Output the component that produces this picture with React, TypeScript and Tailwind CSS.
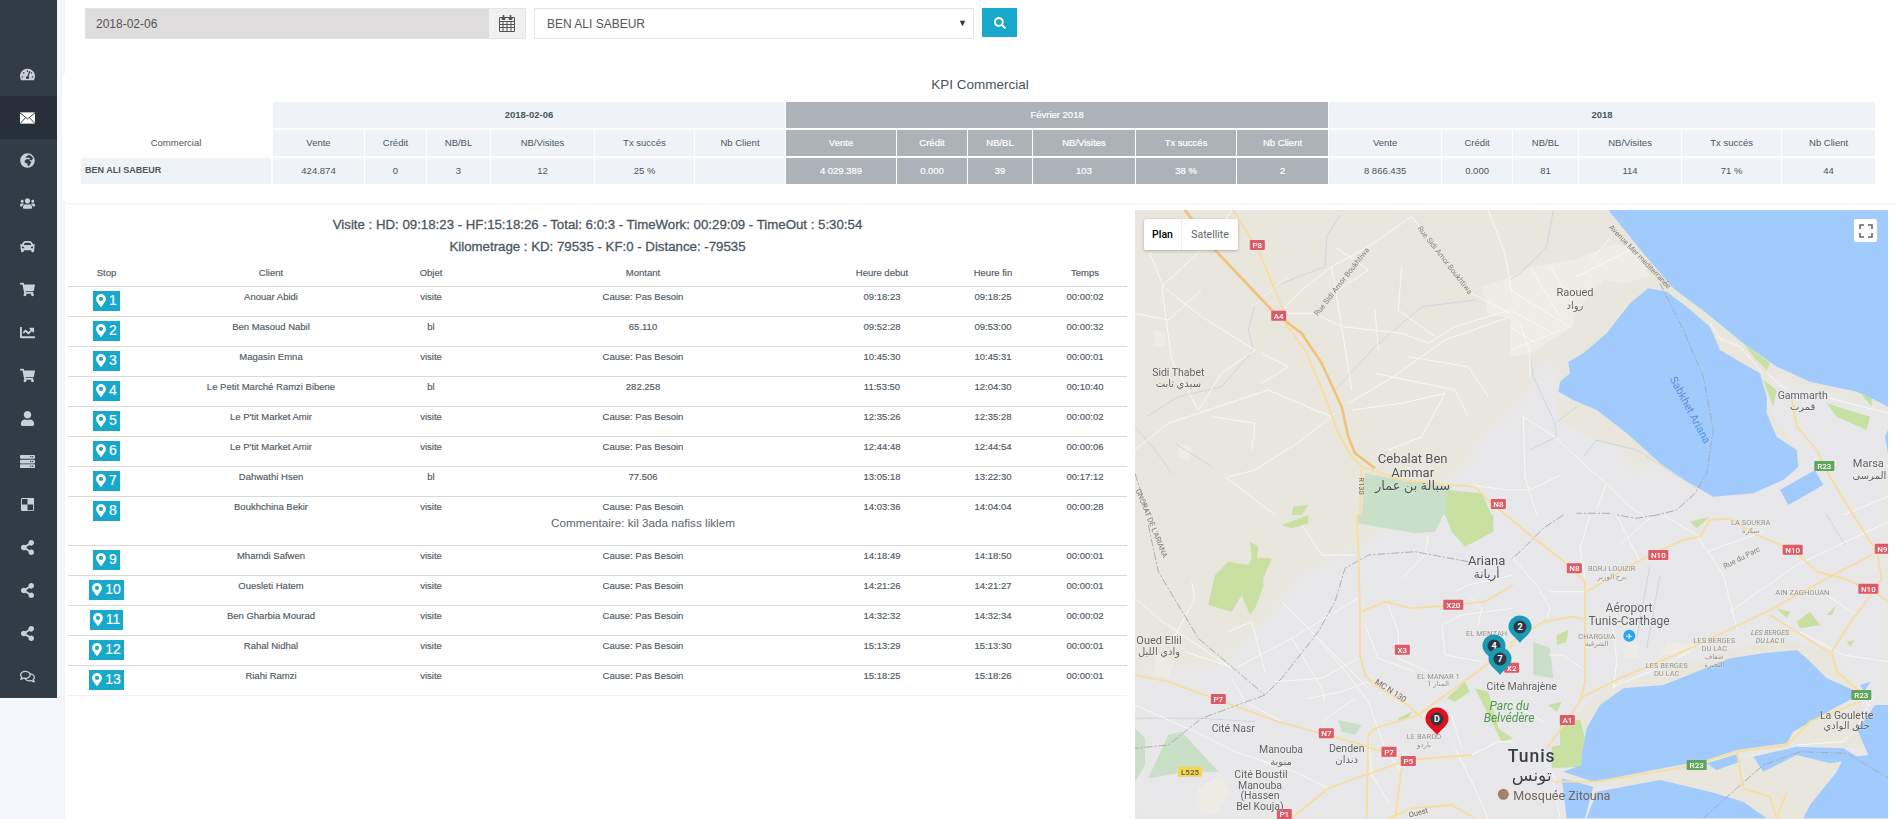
import {
  FaCar,
  FaChartLine,
  FaDelicious,
  FaGlobeAfrica,
  FaMapMarkerAlt,
  FaRegComments,
  FaSearch,
  FaServer,
  FaShareAlt,
  FaShoppingCart,
  FaTachometerAlt,
  FaUser,
  FaUsers,
} from 'react-icons/fa';

function MailIcon({ className }: { className?: string }) {
  return (
    <svg viewBox="0 0 16 12" className={className}>
      <rect width="16" height="12" fill="#fff" />
      <path d="M0 .5L8 7l8-6.5M0 12l6-6.5M16 12l-6-6.5" fill="none" stroke="#27303a" strokeWidth="1" />
    </svg>
  );
}

function CalendarIcon() {
  return (
    <svg viewBox="0 0 16 17" className="h-[17px] w-[16px]" fill="none" stroke="#555" strokeWidth="1">
      <path d="M.5 2.5h15v14H.5zM.5 6.5h15M.5 9.5h15M.5 12.5h15M4 6.5v10M8 6.5v10M12 6.5v10" />
      <path d="M3 2.5h3v2H3zM10 2.5h3v2h-3z" fill="#555" />
      <path d="M4.5 0v3M11.5 0v3" strokeWidth="1.6" />
    </svg>
  );
}

const NAV = [
  FaTachometerAlt,
  MailIcon,
  FaGlobeAfrica,
  FaUsers,
  FaCar,
  FaShoppingCart,
  FaChartLine,
  FaShoppingCart,
  FaUser,
  FaServer,
  FaDelicious,
  FaShareAlt,
  FaShareAlt,
  FaShareAlt,
  FaRegComments,
];

const KPI_HEAD = ['Vente', 'Crédit', 'NB/BL', 'NB/Visites', 'Tx succés', 'Nb Client'];
const KPI_WIDTHS = [192, 92, 62, 64, 104, 100, 91, 111, 71, 65, 103, 101, 92, 113, 71, 66, 103, 100, 94];
const KPI_DAY = ['424.874', '0', '3', '12', '25 %', ''];
const KPI_MONTH = ['4 029.389', '0.000', '39', '103', '38 %', '2'];
const KPI_YEAR = ['8 866.435', '0.000', '81', '114', '71 %', '44'];

const VISIT_WIDTHS = [77, 252, 68, 356, 122, 100, 84];

const VISITS = [
  ['Anouar Abidi', 'visite', 'Cause: Pas Besoin', '09:18:23', '09:18:25', '00:00:02'],
  ['Ben Masoud Nabil', 'bl', '65.110', '09:52:28', '09:53:00', '00:00:32'],
  ['Magasin Emna', 'visite', 'Cause: Pas Besoin', '10:45:30', '10:45:31', '00:00:01'],
  ['Le Petit Marché Ramzi Bibene', 'bl', '282.258', '11:53:50', '12:04:30', '00:10:40'],
  ["Le P'tit Market Amir", 'visite', 'Cause: Pas Besoin', '12:35:26', '12:35:28', '00:00:02'],
  ["Le P'tit Market Amir", 'visite', 'Cause: Pas Besoin', '12:44:48', '12:44:54', '00:00:06'],
  ['Dahwathi Hsen', 'bl', '77.506', '13:05:18', '13:22:30', '00:17:12'],
  ['Boukhchina Bekir', 'visite', 'Cause: Pas Besoin', '14:03:36', '14:04:04', '00:00:28'],
  ['Mhamdi Safwen', 'visite', 'Cause: Pas Besoin', '14:18:49', '14:18:50', '00:00:01'],
  ['Ouesleti Hatem', 'visite', 'Cause: Pas Besoin', '14:21:26', '14:21:27', '00:00:01'],
  ['Ben Gharbia Mourad', 'visite', 'Cause: Pas Besoin', '14:32:32', '14:32:34', '00:00:02'],
  ['Rahal Nidhal', 'visite', 'Cause: Pas Besoin', '15:13:29', '15:13:30', '00:00:01'],
  ['Riahi Ramzi', 'visite', 'Cause: Pas Besoin', '15:18:25', '15:18:26', '00:00:01'],
];

// map is drawn at 3x: coordinates are noted per quadrant (A top left, B top right, C bottom left, D bottom right)
const shift = (dx: number, dy: number) => (...p: number[]) => p.map((v, i) => (i % 2 ? v + dy : v + dx));
const A = shift(0, 0);
const B = shift(1125, 0);
const C = shift(0, 915);
const D = shift(1125, 915);
const line = (p: number[]) => {
  const out: string[] = [];
  for (let i = 0; i < p.length; i += 2) out.push(`${(p[i] / 3).toFixed(1)},${(p[i + 1] / 3).toFixed(1)}`);
  return out.join(' ');
};

const GREY_LAND = [1240, 440, 1170, 560, 1040, 680, 1000, 760, 700, 995, 500, 1095, 380, 1245, 250, 1365, 0, 1385, 0, 1827, 2259, 1827, 2259, 600, 1900, 500, 1700, 700, 1500, 790, 1400, 640, 1300, 560];

const SHORES = [
  B(130, 560, 150, 640, 250, 690, 400, 740, 550, 835, 700, 860, 850, 790, 880, 740, 620, 380, 700, 420, 800, 480, 770, 560),
  D(200, 600, 300, 510, 450, 470, 680, 400, 760, 380, 860, 380, 960, 420, 1050, 530, 900, 640, 830, 700, 680, 720, 250, 810, 180, 800),
  D(330, 790, 680, 730, 1000, 700, 980, 760, 880, 910, 260, 910),
  D(920, 620, 1050, 570, 1060, 700, 850, 690),
  B(240, 130, 320, 60, 290, 0, 600, 340, 620, 420, 430, 240),
];

const WATER = [
  B(295, 0, 400, 130, 490, 235, 590, 310, 700, 400, 800, 470, 900, 515, 1040, 545, 1095, 570, 1134, 590, 1134, 0),
  B(415, 235, 470, 245, 530, 290, 600, 350, 630, 420, 680, 450, 750, 490, 770, 560, 770, 610, 800, 680, 860, 720, 865, 770, 820, 810, 730, 850, 610, 860, 540, 820, 450, 760, 350, 670, 260, 600, 190, 570, 145, 545, 150, 515, 180, 490, 175, 455, 220, 430, 290, 370, 360, 280),
  B(810, 840, 915, 780, 940, 825, 835, 885),
  B(1125, 680, 1134, 660, 1134, 730),
  D(215, 720, 230, 640, 270, 570, 340, 520, 460, 510, 560, 470, 660, 430, 760, 415, 860, 405, 890, 430, 950, 490, 1030, 525, 1030, 550, 980, 575, 920, 610, 850, 650, 830, 685, 680, 705, 590, 735, 430, 765, 250, 800, 160, 770, 215, 750),
  D(590, 745, 680, 718, 690, 740, 620, 765),
  D(230, 910, 260, 830, 450, 795, 600, 830, 700, 860, 770, 910),
  D(155, 790, 250, 815, 225, 910, 170, 910),
  D(730, 725, 860, 695, 1000, 700, 1050, 730, 960, 745, 860, 720, 760, 770),
  D(1040, 640, 1075, 720, 1000, 730, 980, 770, 900, 870, 880, 910, 1134, 910, 1134, 570, 1095, 570, 1060, 620),
  D(1050, 510, 1082, 500, 1062, 530),
];

const PARKS_PALE = [
  A(690, 790, 800, 810, 950, 830, 930, 915, 680, 915),
  C(670, 0, 925, 0, 900, 50, 840, 55, 670, 25),
  C(100, 660, 140, 650, 250, 770, 130, 775, 40, 790),
  C(610, 615, 680, 630, 660, 660, 620, 650),
  D(70, 380, 120, 400, 130, 490, 70, 480),
  C(0, 640, 30, 670, 30, 750, 0, 800),
];

const PARKS = [
  A(940, 840, 1040, 850, 1070, 915, 930, 915),
  C(930, 0, 1075, 0, 1075, 50, 990, 95, 950, 50),
  A(475, 890, 520, 885, 500, 915, 470, 915),
  C(440, 30, 520, 0, 520, 25, 470, 40),
  C(220, 270, 240, 180, 280, 140, 340, 150, 350, 130, 410, 130, 385, 190, 385, 215, 360, 280, 345, 300, 320, 240, 290, 290),
  C(345, 80, 370, 95, 365, 135, 350, 130),
  C(935, 550, 990, 500, 1005, 530, 960, 560),
  C(1020, 520, 1060, 530, 1090, 640, 1134, 670, 1100, 680, 1060, 600),
  C(790, 610, 830, 590, 820, 610, 790, 620),
  D(150, 620, 210, 615, 225, 670, 215, 755, 125, 760, 125, 695, 150, 690),
  D(140, 360, 175, 345, 170, 380, 140, 390),
  D(115, 570, 155, 560, 140, 590),
  D(860, 320, 900, 290, 930, 330, 870, 340),
  D(950, 300, 980, 270, 965, 300),
  D(540, 20, 600, 5, 560, 40),
  D(1010, 380, 1035, 375, 1020, 395),
  D(800, 280, 840, 290, 830, 310),
  B(700, 400, 780, 460, 770, 480, 730, 440),
  B(950, 580, 1080, 620, 1070, 660, 980, 620),
  B(1055, 555, 1085, 560, 1085, 590),
  B(760, 510, 800, 540, 790, 590),
];

const PALE_BLOCKS = [
  B(0, 200, 60, 170, 190, 150, 320, 100, 380, 120, 420, 200, 340, 220, 280, 210, 200, 300, 190, 350, 60, 430, 0, 440),
  A(1040, 230, 1125, 200, 1125, 320, 1060, 320),
  C(190, 820, 260, 780, 285, 830, 240, 900, 190, 880),
  C(60, 410, 120, 440, 100, 490, 60, 480),
  A(60, 360, 95, 370, 90, 410, 55, 410),
  A(130, 700, 170, 710, 160, 750, 130, 740),
  D(350, 380, 390, 380, 385, 430, 340, 430),
  D(450, 420, 470, 380, 560, 390, 530, 420),
];

const CREEKS = [
  A(615, 15, 575, 80, 570, 170, 440, 220, 360, 280, 340, 360, 355, 420, 260, 530, 130, 560, 35, 620),
  A(1020, 270, 860, 290, 720, 410, 600, 540),
  A(120, 700, 230, 770),
  A(0, 650, 60, 720, 110, 790),
  B(130, 0, 110, 110, 30, 190, 0, 210),
  B(60, 430, 70, 500, 135, 640, 200, 590),
  B(135, 640, 140, 680, 60, 720),
  B(220, 740, 260, 690, 380, 720, 540, 820),
  C(0, 610, 200, 610, 360, 620),
  D(420, 150, 380, 370),
  D(450, 180, 410, 400),
  D(950, 0, 1005, 90),
];

const MINOR_ROADS = [
  A(0, 720, 100, 640, 250, 590, 400, 540, 540, 600, 590, 620),
  A(80, 230, 230, 90, 290, 0),
  A(80, 230, 110, 450, 190, 600),
  A(0, 310, 100, 330, 200, 240),
  A(45, 130, 85, 230, 200, 320, 360, 420),
  A(440, 310, 540, 310, 620, 350),
  A(350, 290, 460, 200),
  A(360, 420, 260, 490, 190, 600),
  A(830, 20, 700, 110, 590, 170, 500, 240, 440, 300),
  A(590, 170, 620, 350, 650, 540),
  A(620, 350, 800, 370, 880, 400, 960, 350, 1125, 300),
  A(640, 580, 760, 510, 930, 390, 1125, 320),
  A(720, 490, 960, 540, 1000, 620),
  A(800, 170, 790, 300, 900, 380),
  A(830, 20, 1010, 250, 1125, 310),
  A(1060, 0, 1110, 130, 1130, 250),
  A(280, 800, 360, 780, 500, 690, 600, 610),
  A(650, 600, 800, 580, 930, 550, 860, 680, 760, 720),
  A(1000, 825, 1125, 840),
  A(380, 430, 460, 470, 380, 520),
  A(230, 620, 360, 640, 350, 720),
  A(600, 110, 700, 180, 610, 240),
  A(820, 440, 1000, 470, 1060, 560),
  A(720, 300, 730, 420),
  A(270, 800, 420, 915),
  B(40, 620, 135, 680, 230, 770, 300, 830, 360, 890, 400, 915),
  B(40, 620, 45, 800, 80, 915),
  B(0, 840, 60, 840, 150, 795),
  B(290, 820, 260, 900),
  B(0, 240, 180, 350),
  B(0, 300, 130, 370),
  B(0, 350, 80, 400),
  B(60, 170, 150, 320),
  B(120, 170, 190, 280),
  B(0, 420, 180, 350),
  B(30, 340, 60, 430, 60, 500),
  B(200, 200, 360, 120),
  B(300, 85, 240, 150),
  B(620, 380, 690, 410, 760, 490),
  B(600, 340, 640, 400),
  B(770, 490, 830, 540),
  B(960, 565, 1134, 610),
  B(1000, 915, 1134, 860),
  C(440, 260, 530, 350, 640, 480, 700, 560, 750, 700, 800, 770),
  C(670, 250, 470, 370, 300, 460, 150, 410),
  C(470, 370, 560, 520, 570, 560),
  C(530, 350, 700, 520),
  C(500, 30, 560, 120, 660, 120),
  C(0, 570, 180, 650, 300, 710, 480, 770, 580, 820),
  C(420, 500, 560, 490, 670, 430),
  C(520, 550, 620, 530, 700, 500),
  C(560, 620, 660, 550),
  C(760, 270, 790, 350, 790, 430, 880, 470),
  C(690, 330, 730, 430, 840, 470),
  C(880, 60, 870, 120, 800, 190),
  C(960, 230, 1000, 210, 1134, 180),
  C(920, 330, 980, 300, 1134, 280),
  C(920, 330, 930, 420, 1040, 440),
  C(1010, 720, 1090, 680, 1134, 680),
  C(950, 600, 980, 700),
  C(700, 660, 710, 780, 760, 860),
  C(290, 490, 330, 560, 440, 620),
  C(280, 350, 350, 320, 390, 470),
  C(0, 250, 70, 310, 290, 460),
  C(170, 200, 180, 250, 110, 380),
  C(1000, 240, 1040, 280, 1030, 330),
  C(960, 700, 1010, 800, 1060, 910),
  D(240, 0, 210, 100, 225, 190),
  D(320, 0, 390, 140),
  D(430, 0, 330, 90),
  D(460, 0, 560, 60, 640, 180, 680, 340),
  D(590, 110, 760, 50),
  D(660, 290, 860, 150, 1134, 20),
  D(1134, 440, 1000, 420, 870, 350),
  D(950, 240, 1040, 300),
  D(0, 120, 80, 210, 120, 280, 110, 310),
  D(120, 230, 230, 230),
  D(310, 340, 320, 440, 310, 520, 340, 490),
  D(0, 560, 100, 620),
  D(115, 420, 160, 420, 215, 460),
  D(80, 700, 140, 800),
  D(130, 800, 150, 910),
  D(250, 890, 300, 840, 450, 800),
  D(310, 515, 420, 470, 540, 410),
  D(1040, 640, 1090, 540),
  D(860, 690, 1000, 680, 1040, 640),
];

const YELLOW_ROADS = [
  A(295, 0, 370, 120, 445, 300),
  A(450, 340, 510, 420, 570, 560, 610, 670, 650, 740, 680, 770),
  A(680, 770, 800, 810, 900, 820, 1020, 830, 1070, 880, 1125, 925),
  D(0, 10, 60, 60, 175, 150, 225, 200, 225, 500, 210, 560, 110, 700),
  A(680, 770, 675, 915),
  C(665, 0, 670, 100, 675, 280, 675, 420, 690, 480, 720, 510, 820, 570, 860, 610),
  C(680, 290, 750, 260, 830, 280, 950, 270, 1050, 260, 1134, 210),
  C(0, 480, 100, 500, 250, 555, 430, 620, 575, 660, 650, 680, 740, 710, 820, 735),
  C(700, 660, 720, 640, 850, 600, 1000, 490, 1134, 390),
  D(0, 385, 100, 320, 190, 305, 230, 315),
  C(700, 660, 695, 910),
  C(470, 910, 580, 820, 690, 780, 820, 735, 1010, 720),
  C(800, 760, 780, 910),
  C(760, 910, 830, 880, 950, 870, 1020, 910),
  D(230, 230, 330, 170, 420, 120, 520, 75, 570, 65, 600, 15, 660, 10, 740, 60, 850, 105, 920, 170, 1000, 190, 1075, 220, 1137, 260),
  D(1030, 0, 1100, 110, 1115, 190, 1090, 230, 1030, 310, 965, 410, 980, 470, 1050, 530),
  D(210, 550, 330, 490, 540, 400, 780, 285, 970, 180, 1095, 115, 1137, 95),
  D(780, 300, 960, 415),
  D(130, 800, 260, 800, 530, 755, 680, 710, 830, 690, 900, 620, 1050, 560),
  D(680, 710, 700, 820, 780, 845, 800, 910),
  D(830, 830, 800, 910),
  B(845, 570, 860, 650, 920, 720, 960, 800, 1030, 915),
];

const HIGHWAY = A(150, 0, 240, 120, 410, 300, 460, 340, 500, 370, 560, 460, 620, 590, 640, 680, 660, 730, 720, 775);

const BOUNDARIES = [
  B(450, 220, 520, 360, 580, 500, 610, 660, 590, 790, 555, 850, 500, 900, 440, 915),
  D(440, 0, 380, 10, 320, 0),
  B(300, 910, 200, 910),
  D(160, 0, 100, 40, 30, 110, 0, 135),
  C(1000, 140, 840, 110, 700, 120, 630, 160, 600, 260, 550, 350, 440, 490, 390, 540, 200, 610, 100, 690, 0, 700),
  C(40, 30, 70, 170, 190, 370, 390, 540),
  A(0, 790, 40, 915),
  D(580, 910, 680, 820, 760, 750, 870, 710, 1010, 715, 1137, 790),
];

const RED = '#de5a66';
const GREEN = '#5fa55a';
const GOLD = '#f6d44e';

const SHIELDS: [string, number[], string][] = [
  ['P8', A(367, 105), RED],
  ['A4', A(431, 317), RED],
  ['N8', A(1090, 882), RED],
  ['N8', D(193, 160), RED],
  ['N10', D(445, 120), RED],
  ['N10', D(848, 104), RED],
  ['N9', D(1117, 101), RED],
  ['N10', D(1075, 221), RED],
  ['A1', D(172, 615), RED],
  ['R23', D(1054, 540), GREEN],
  ['R23', D(560, 750), GREEN],
  ['R23', B(943, 768), GREEN],
  ['X20', C(955, 269), RED],
  ['X3', C(802, 404), RED],
  ['X2', C(1130, 458), RED],
  ['P7', C(250, 552), RED],
  ['N7', C(574, 655), RED],
  ['P7', C(762, 710), RED],
  ['P5', C(820, 738), RED],
  ['L525', C(165, 770), GOLD],
  ['P1', C(448, 897), RED],
];

const TOWN = '#616161';
const BIG = '#4f5358';
const QUARTER = '#938d80';

// text, position, size, colour
const LABELS: [string, number[], number, string][] = [
  ['Sidi Thabet', A(130, 487), 10.5, TOWN],
  ['سيدي ثابت', A(130, 521), 10, TOWN],
  ['Cebalat Ben', A(833, 746), 13, BIG],
  ['Ammar', A(833, 787), 13, BIG],
  ['سبالة بن عمار', A(833, 827), 13, BIG],
  ['Raoued', B(195, 247), 11, TOWN],
  ['رواد', B(195, 285), 10, TOWN],
  ['Gammarth', B(878, 557), 10.5, TOWN],
  ['قمرت', B(878, 590), 10, TOWN],
  ['Marsa', B(1075, 760), 11, TOWN],
  ['المرسى', B(1078, 795), 10, TOWN],
  ['Ariana', C(1055, 135), 13, BIG],
  ['أريانة', C(1055, 177), 12, BIG],
  ['Oued Ellil', C(72, 375), 11, TOWN],
  ['وادي الليل', C(72, 410), 10, TOWN],
  ['EL MENZAH', C(1055, 354), 7.5, QUARTER],
  ['EL MANAR 1', C(910, 483), 7.5, QUARTER],
  ['المنار 1', C(910, 507), 7, QUARTER],
  ['Cité Nasr', C(295, 640), 10.5, TOWN],
  ['Manouba', C(438, 704), 10.5, TOWN],
  ['منوبة', C(438, 738), 10, TOWN],
  ['Denden', C(635, 699), 10.5, TOWN],
  ['دندان', C(635, 733), 10, TOWN],
  ['LE BARDO', C(867, 663), 7.5, QUARTER],
  ['باردو', C(867, 689), 7, QUARTER],
  ['Cité Boustil', C(378, 777), 10.5, TOWN],
  ['Manouba', C(375, 810), 10.5, TOWN],
  ['(Hassen', C(375, 842), 10.5, TOWN],
  ['Bel Kouja)', C(375, 875), 10.5, TOWN],
  ['Cité Mahrajène', D(35, 515), 10.5, TOWN],
  ['BORJ LOUIZIR', D(305, 160), 7.5, QUARTER],
  ['برج الوزير', D(305, 187), 7, QUARTER],
  ['LA SOUKRA', D(722, 22), 7.5, QUARTER],
  ['سكرة', D(722, 47), 7, QUARTER],
  ['Aéroport', D(357, 280), 12, TOWN],
  ['Tunis-Carthage', D(357, 318), 12, TOWN],
  ['CHARGUIA', D(260, 363), 7.5, QUARTER],
  ['الشرقية', D(260, 388), 7, QUARTER],
  ['AIN ZAGHOUAN', D(877, 233), 7.5, QUARTER],
  ['LES BERGES', D(613, 377), 7.5, QUARTER],
  ['DU LAC', D(613, 400), 7.5, QUARTER],
  ['ضفاف', D(613, 425), 7, QUARTER],
  ['البحيرة', D(613, 450), 7, QUARTER],
  ['LES BERGES', D(470, 452), 7.5, QUARTER],
  ['DU LAC', D(470, 476), 7.5, QUARTER],
  ['La Goulette', D(1010, 600), 10.5, TOWN],
  ['حلق الوادي', D(1010, 632), 10, TOWN],
  ['تونس', D(65, 780), 17, '#3c4043'],
];

const ROTATED: [string, number[], number, number, string][] = [
  ['Sabkhet Ariana', B(540, 600), 62, 11, '#5b8fd6'],
  ['Avenue Mer mediterranée', B(390, 140), 46, 7.5, '#84827a'],
  ['Rue Sidi Amor Boukhtiwa', A(620, 215), -52, 7.5, '#84827a'],
  ['Rue Sidi Amor Boukhtiwa', A(930, 150), 52, 7.5, '#84827a'],
  ['R130', A(678, 828), 90, 7.5, '#6f6a5e'],
  ['MC N 130', C(767, 527), 33, 8, '#6f6a5e'],
  ["GNORAT DE L'ARIANA", C(50, 25), 68, 7.5, '#84827a'],
  ['Rue du Parc', D(695, 128), -27, 7.5, '#84827a'],
  ['Ouest', C(850, 893), -15, 7.5, '#6f6a5e'],
];

const PINS: [string, number, number, string][] = [
  ['2', 385, 417, '#1a9bb5'],
  ['4', 359, 436, '#1a9bb5'],
  ['7', 365, 449, '#1a9bb5'],
  ['D', 302, 509, '#e3101c'],
];

function MapPin({ label, x, y, color }: { label: string; x: number; y: number; color: string }) {
  return (
    <g>
      <path
        d={`M${x} ${y + 16} C${x - 3} ${y + 11} ${x - 11.5} ${y + 7} ${x - 11.5} ${y} A11.5 11.5 0 1 1 ${x + 11.5} ${y} C${x + 11.5} ${y + 7} ${x + 3} ${y + 11} ${x} ${y + 16}Z`}
        fill={color}
      />
      <circle cx={x} cy={y} r={6.5} fill="#2c3845" />
      <text x={x} y={y + 3.2} textAnchor="middle" fontSize={9} fontWeight={700} fill="#fff">
        {label}
      </text>
    </g>
  );
}

function MapCanvas() {
  const [airX, airY] = D(358, 362);
  const [mosqueX, mosqueY] = C(1105, 838);
  return (
    <svg viewBox="0 0 753 609" className="block h-full w-full" fontFamily="Roboto, 'DejaVu Sans', sans-serif">
      <defs>
        <filter id="soft">
          <feGaussianBlur stdDeviation="0.3" />
        </filter>
        <filter id="wide">
          <feGaussianBlur stdDeviation="5" />
        </filter>
      </defs>
      <g filter="url(#soft)">
        <rect width="753" height="609" fill="#e8e6dd" />
        <polygon filter="url(#wide)" points={line(GREY_LAND)} fill="#e8e8ea" />
        {SHORES.map((p, i) => (
          <polygon key={i} points={line(p)} fill="#e8e6dd" />
        ))}
        {PALE_BLOCKS.map((p, i) => (
          <polygon key={i} points={line(p)} fill="#eeece4" />
        ))}
        {PARKS_PALE.map((p, i) => (
          <polygon key={i} points={line(p)} fill="#c9dfc7" />
        ))}
        {PARKS.map((p, i) => (
          <polygon key={i} points={line(p)} fill="#c8e0a2" />
        ))}
        {CREEKS.map((p, i) => (
          <polyline key={i} points={line(p)} fill="none" stroke="#c7d5e3" strokeWidth={0.9} />
        ))}
        {MINOR_ROADS.map((p, i) => (
          <polyline key={i} points={line(p)} fill="none" stroke="#f8f8f5" strokeWidth={1} strokeLinejoin="round" />
        ))}
        {WATER.map((p, i) => (
          <polygon key={i} points={line(p)} fill="#a2cbfd" />
        ))}
        {BOUNDARIES.map((p, i) => (
          <polyline key={i} points={line(p)} fill="none" stroke="#a3a8ad" strokeWidth={0.9} strokeDasharray="8 2 2 2" />
        ))}
        {YELLOW_ROADS.map((p, i) => (
          <polyline key={i} points={line(p)} fill="none" stroke="#f8dd9c" strokeWidth={1.8} strokeLinejoin="round" />
        ))}
        <polyline points={line(HIGHWAY)} fill="none" stroke="#f2c27a" strokeWidth={2.6} strokeLinejoin="round" />
        {SHIELDS.map(([t, [x, y], c], i) => {
          const w = t.length > 3 ? 24 : t.length > 2 ? 20 : 15;
          return (
            <g key={i}>
              <rect x={x / 3 - w / 2} y={y / 3 - 5} width={w} height={10} rx={1} fill={c} />
              <text x={x / 3} y={y / 3 + 3} textAnchor="middle" fontSize={8} fontWeight={500} fill={c === GOLD ? '#5a5a5a' : '#fff'}>
                {t}
              </text>
            </g>
          );
        })}
        {LABELS.map(([t, [x, y], s, c], i) => (
          <text key={i} x={x / 3} y={y / 3} dominantBaseline="central" textAnchor="middle" fontSize={s} fill={c} stroke="#fff" strokeOpacity={0.55} strokeWidth={0.6} paintOrder="stroke">
            {t}
          </text>
        ))}
        {ROTATED.map(([t, [x, y], r, s, c], i) => (
          <text key={i} transform={`translate(${x / 3} ${y / 3}) rotate(${r})`} dominantBaseline="central" textAnchor="middle" fontSize={s} fill={c}>
            {t}
          </text>
        ))}
        <text x={1190 / 3} y={1637 / 3} dominantBaseline="central" textAnchor="middle" fontSize={17.5} fontWeight={500} fill="#3c4043" letterSpacing={1}>
          Tunis
        </text>
        <text x={1123 / 3} y={1487 / 3} dominantBaseline="central" textAnchor="middle" fontSize={12} fontStyle="italic" fill="#4e9a4e">
          Parc du
        </text>
        <text x={1122 / 3} y={1525 / 3} dominantBaseline="central" textAnchor="middle" fontSize={12} fontStyle="italic" fill="#4e9a4e">
          Belvédère
        </text>
        <text x={1905 / 3} y={1270 / 3} dominantBaseline="central" textAnchor="middle" fontSize={7} fontStyle="italic" fill={QUARTER}>
          LES BERGES
        </text>
        <text x={1905 / 3} y={1293 / 3} dominantBaseline="central" textAnchor="middle" fontSize={7} fontStyle="italic" fill={QUARTER}>
          DU LAC II
        </text>
        <text x={1135 / 3} y={1755 / 3} dominantBaseline="central" fontSize={12.5} fill="#72665e">
          Mosquée Zitouna
        </text>
        <circle cx={airX / 3} cy={airY / 3} r={6} fill="#29a6ec" />
        <text x={airX / 3} y={airY / 3 + 3} textAnchor="middle" fontSize={8} fill="#fff">
          ✈
        </text>
        <circle cx={mosqueX / 3} cy={mosqueY / 3} r={5.5} fill="#a5816c" />
      </g>
      {PINS.map(([t, x, y, c]) => (
        <MapPin key={t} label={t} x={x} y={y} color={c} />
      ))}
    </svg>
  );
}

function Sidebar() {
  return (
    <aside className="h-[698px] w-[57px] shrink-0 bg-[#323c46] pt-[53px]">
      {NAV.map((Icon, i) => (
        <div
          key={i}
          className={
            i === 1
              ? 'flex h-[43px] items-center justify-center bg-[#27303a] pr-[3px] text-white'
              : 'flex h-[43px] items-center justify-center pr-[3px] text-[#c9d0d6]'
          }
        >
          <Icon className={i === 1 ? 'h-[12px] w-[15px]' : 'size-[15px]'} />
        </div>
      ))}
    </aside>
  );
}

function SearchBar() {
  return (
    <div className="flex h-[72px] items-start pl-5 pt-2 text-[12px] text-[#555]">
      <div className="flex h-[31px] w-[441px] border border-[#e4e4e4] bg-[#dedcdc]">
        <input readOnly value="2018-02-06" className="min-w-0 flex-1 bg-transparent pl-[10px] outline-none" />
        <span className="flex w-[36px] items-center justify-center bg-[#f0f0f0]">
          <CalendarIcon />
        </span>
      </div>
      <div className="ml-2 flex h-[31px] w-[440px] items-center justify-between border border-[#e4e4e4] pl-3 pr-[6px]">
        <span>BEN ALI SABEUR</span>
        <span className="text-[9px] text-[#333]">▼</span>
      </div>
      <button type="button" className="ml-[8px] flex h-[29px] w-[35px] items-center justify-center bg-[#17a8cc] text-white">
        <FaSearch className="size-[12px]" />
      </button>
    </div>
  );
}

function KpiTable() {
  const cell = 'border-b-2 border-r border-white text-center font-normal';
  const light = `${cell} bg-[#eff3f7]`;
  const dark = `${cell} bg-[#adb1b8] text-white [-webkit-text-stroke:0.2px]`;
  return (
    <table className="ml-[19px] w-[1795px] table-fixed border-separate border-spacing-0 text-[9.5px] text-[#4d5761]">
      <colgroup>
        {KPI_WIDTHS.map((w, i) => (
          <col key={i} style={{ width: w }} />
        ))}
      </colgroup>
      <thead>
        <tr className="h-[28px]">
          <th rowSpan={2} className="border-r-2 border-white pb-[8px] align-bottom font-normal">
            Commercial
          </th>
          <th colSpan={6} className={light}>
            <b>2018-02-06</b>
          </th>
          <th colSpan={6} className={dark}>
            Février 2018
          </th>
          <th colSpan={6} className={light}>
            <b>2018</b>
          </th>
        </tr>
        <tr className="h-[28px]">
          {KPI_HEAD.map((h) => (
            <th key={h} className={light}>
              {h}
            </th>
          ))}
          {KPI_HEAD.map((h) => (
            <th key={h} className={dark}>
              {h}
            </th>
          ))}
          {KPI_HEAD.map((h) => (
            <th key={h} className={light}>
              {h}
            </th>
          ))}
        </tr>
      </thead>
      <tbody>
        <tr className="h-[28px]">
          <td className="border-b-2 border-r-2 border-white bg-[#eff3f7] pl-[4px] text-[9px] font-bold">BEN ALI SABEUR</td>
          {KPI_DAY.map((v, i) => (
            <td key={i} className={light}>
              {v}
            </td>
          ))}
          {KPI_MONTH.map((v, i) => (
            <td key={i} className={dark}>
              {v}
            </td>
          ))}
          {KPI_YEAR.map((v, i) => (
            <td key={i} className={light}>
              {v}
            </td>
          ))}
        </tr>
      </tbody>
    </table>
  );
}

function VisitsTable() {
  return (
    <table className="ml-[3px] mt-[2px] w-[1059px] table-fixed border-collapse text-center text-[9.5px] text-[#4f5963] [-webkit-text-stroke:0.15px]">
      <colgroup>
        {VISIT_WIDTHS.map((w, i) => (
          <col key={i} style={{ width: w }} />
        ))}
      </colgroup>
      <thead>
        <tr className="h-[26px] border-b border-[#d9d9d9]">
          {['Stop', 'Client', 'Objet', 'Montant', 'Heure debut', 'Heure fin', 'Temps'].map((h) => (
            <th key={h} className="font-normal">
              {h}
            </th>
          ))}
        </tr>
      </thead>
      <tbody>
        {VISITS.map((row, i) => (
          <tr key={i} className={i === VISITS.length - 1 ? 'h-[30px] border-b border-[#f2f2f2]' : 'border-b border-[#d9d9d9]'}>
            <td className={i === 7 ? 'h-[49px] pt-[4px] align-top' : 'h-[30px] pt-[4px] align-top'}>
              <span className="inline-flex h-[20px] items-center gap-[3px] bg-[#17a8cc] px-[3px] text-[14px] text-white">
                <FaMapMarkerAlt className="h-[13px] w-[10px]" />
                {i + 1}
              </span>
            </td>
            {row.map((v, j) => (
              <td key={j} className="pt-[4px] align-top leading-[12px]">
                {v}
                {i === 7 && j === 2 && <div className="mt-[2px] text-[11.7px] leading-[16px] text-[#5b646d] [-webkit-text-stroke:0]">Commentaire: kil 3ada nafiss liklem</div>}
              </td>
            ))}
          </tr>
        ))}
      </tbody>
    </table>
  );
}

export default function App() {
  return (
    <div className="flex h-[819px] w-[1895px] overflow-hidden bg-[#f3f6fa] font-['Liberation_Sans',Arial,sans-serif]">
      <Sidebar />
      <main className="ml-[8px] min-w-0 flex-1 bg-white">
        <SearchBar />
        <section className="-ml-[3px] h-[133px] rounded-l-[8px] border-b-2 border-[#f3f6fa] bg-white">
          <h2 className="pl-[3px] pt-[5px] text-center text-[13.5px] leading-[16px] text-[#47525d]">KPI Commercial</h2>
          <div className="mt-[9px]">
            <KpiTable />
          </div>
        </section>
        <section className="flex">
          <div className="w-[1070px] shrink-0">
            <div className="pr-[5px] pt-[9px] text-center text-[13.25px] leading-[22px] text-[#4b5661] [-webkit-text-stroke:0.3px]">
              <p>Visite : HD: 09:18:23 - HF:15:18:26 - Total: 6:0:3 - TimeWork: 00:29:09 - TimeOut : 5:30:54</p>
              <p>Kilometrage : KD: 79535 - KF:0 - Distance: -79535</p>
            </div>
            <VisitsTable />
          </div>
          <div className="relative mt-[5px] h-[609px] w-[753px] shrink-0 overflow-hidden">
            <MapCanvas />
            <div className="absolute left-[9px] top-[9px] flex h-[31px] items-center rounded-[2px] bg-white font-['Roboto',sans-serif] text-[10.5px] shadow-[0_1px_3px_rgba(0,0,0,0.25)]">
              <span className="flex h-full w-[38px] items-center justify-center border-r border-[#eee] font-medium text-black">Plan</span>
              <span className="flex h-full w-[56px] items-center justify-center text-[#666]">Satellite</span>
            </div>
            <div className="absolute left-[719px] top-[9px] flex size-[23px] items-center justify-center rounded-[2px] bg-white">
              <svg viewBox="0 0 14 14" className="size-[14px]" fill="none" stroke="#666" strokeWidth="1.6">
                <path d="M1 5V1h4M9 1h4v4M13 9v4H9M5 13H1V9" />
              </svg>
            </div>
          </div>
        </section>
      </main>
    </div>
  );
}
